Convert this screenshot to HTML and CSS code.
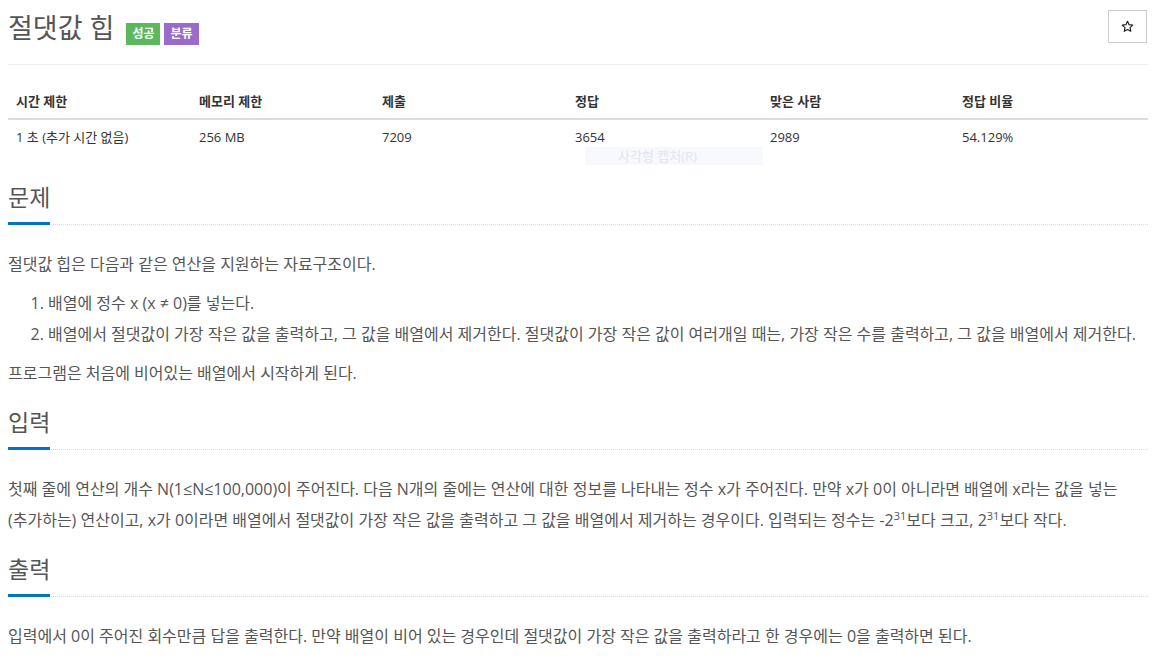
FILE: index.html
```html
<!DOCTYPE html>
<html lang="ko">
<head>
<meta charset="utf-8">
<title>절댓값 힙</title>
<link rel="stylesheet" href="styles.css">
</head>
<body>
<div class="container">
  <div class="page-header">
    <h1 class="title">
      <span class="title-text">절댓값 힙</span>
      <span class="label label-green">성공</span>
      <span class="label label-purple">분류</span>
    </h1>
    <button class="star-btn" type="button" aria-label="즐겨찾기">
      <svg width="13" height="13" viewBox="0 0 24 24"><path d="M12 2.5l2.9 6.2 6.8.8-5 4.6 1.3 6.7L12 17.5l-6 3.3 1.3-6.7-5-4.6 6.8-.8z" fill="none" stroke="#222" stroke-width="2.2" stroke-linejoin="round"/></svg>
    </button>
  </div>

  <div class="table-wrap">
    <table class="info-table">
      <thead>
        <tr>
          <th class="c1">시간 제한</th>
          <th class="c2">메모리 제한</th>
          <th class="c3">제출</th>
          <th class="c4">정답</th>
          <th class="c5">맞은 사람</th>
          <th class="c6">정답 비율</th>
        </tr>
      </thead>
      <tbody>
        <tr>
          <td>1 초 (추가 시간 없음)</td>
          <td>256 MB</td>
          <td>7209</td>
          <td>3654</td>
          <td>2989</td>
          <td>54.129%</td>
        </tr>
      </tbody>
    </table>
    <div class="capture-hint">사각형 캡처(R)</div>
  </div>

  <section class="problem-section">
    <div class="headline"><h2>문제</h2></div>
    <div class="problem-text">
      <p>절댓값 힙은 다음과 같은 연산을 지원하는 자료구조이다.</p>
      <ol>
        <li>배열에 정수 x (x ≠ 0)를 넣는다.</li>
        <li>배열에서 절댓값이 가장 작은 값을 출력하고, 그 값을 배열에서 제거한다. 절댓값이 가장 작은 값이 여러개일 때는, 가장 작은 수를 출력하고, 그 값을 배열에서 제거한다.</li>
      </ol>
      <p>프로그램은 처음에 비어있는 배열에서 시작하게 된다.</p>
    </div>
  </section>

  <section class="problem-section">
    <div class="headline"><h2>입력</h2></div>
    <div class="problem-text">
      <p>첫째 줄에 연산의 개수 N(1≤N≤100,000)이 주어진다. 다음 N개의 줄에는 연산에 대한 정보를 나타내는 정수 x가 주어진다. 만약 x가 0이 아니라면 배열에 x라는 값을 넣는 (추가하는) 연산이고, x가 0이라면 배열에서 절댓값이 가장 작은 값을 출력하고 그 값을 배열에서 제거하는 경우이다. 입력되는 정수는 -2<sup>31</sup>보다 크고, 2<sup>31</sup>보다 작다.</p>
    </div>
  </section>

  <section class="problem-section">
    <div class="headline"><h2>출력</h2></div>
    <div class="problem-text">
      <p>입력에서 0이 주어진 회수만큼 답을 출력한다. 만약 배열이 비어 있는 경우인데 절댓값이 가장 작은 값을 출력하라고 한 경우에는 0을 출력하면 된다.</p>
    </div>
  </section>
</div>
</body>
</html>
```

FILE: styles.css
```css
* { box-sizing: border-box; }

body {
  margin: 0;
  background: #fff;
  font-family: "Open Sans", "Noto Sans CJK KR", sans-serif;
  color: #555;
}

.container {
  width: 1140px;
  margin-left: 8px;
}

.page-header {
  display: flex;
  justify-content: space-between;
  align-items: flex-start;
  height: 65px;
  border-bottom: 1px solid #eee;
}

.title {
  margin: 0;
  padding-top: 8px;
  display: flex;
  align-items: center;
  font-weight: 400;
  font-size: 27px;
  line-height: 40px;
  color: #555;
}

.title-text {
  margin-right: 12px;
}

.label {
  display: inline-block;
  height: 22px;
  padding: 0 6px;
  font-size: 12px;
  line-height: 22px;
  font-weight: 700;
  color: #fff;
  margin-right: 4px;
  margin-top: 11px;
}

.label-green { background: #5cb85c; }
.label-purple { background: #9b6bcc; }

.star-btn {
  margin-top: 10px;
  margin-right: 1px;
  width: 39px;
  height: 33px;
  border: 1px solid #ccc;
  background: #fff;
  padding: 0;
  display: flex;
  align-items: center;
  justify-content: center;
}

.table-wrap {
  position: relative;
  margin-top: 19px;
  margin-bottom: 28px;
}

.info-table {
  width: 100%;
  border-collapse: collapse;
  font-size: 13px;
  color: #333;
  table-layout: fixed;
}

.info-table th,
.info-table td {
  text-align: left;
  padding: 8px 8px;
  line-height: 18px;
}

.info-table th {
  font-weight: 700;
  border-bottom: 2px solid #ddd;
}

.c1 { width: 183px; }
.c2 { width: 183px; }
.c3 { width: 193px; }
.c4 { width: 195px; }
.c5 { width: 192px; }

.capture-hint {
  position: absolute;
  left: 577px;
  top: 63px;
  width: 178px;
  height: 18px;
  background: #f8f9fd;
  color: #e2e5ec;
  font-size: 13px;
  line-height: 18px;
  padding-left: 33px;
}

.problem-section {
  margin-bottom: 18px;
}

.headline {
  border-bottom: 1px dotted #ddd;
  margin-bottom: 24px;
}

.headline h2 {
  display: inline-block;
  margin: 0 0 -1px 0;
  padding: 0 0 10px 0;
  font-size: 23px;
  font-weight: 400;
  line-height: 30px;
  color: #555;
  border-bottom: 3px solid #0076c0;
}

.problem-text {
  font-size: 16px;
  line-height: 31px;
  color: #555;
  word-break: keep-all;
}

.problem-text p {
  margin: 0 0 8px 0;
}

.problem-text ol {
  margin: 0 0 8px 0;
  padding-left: 40px;
}

.problem-text sup {
  font-size: 11px;
  line-height: 0;
  vertical-align: 6px;
}
```
